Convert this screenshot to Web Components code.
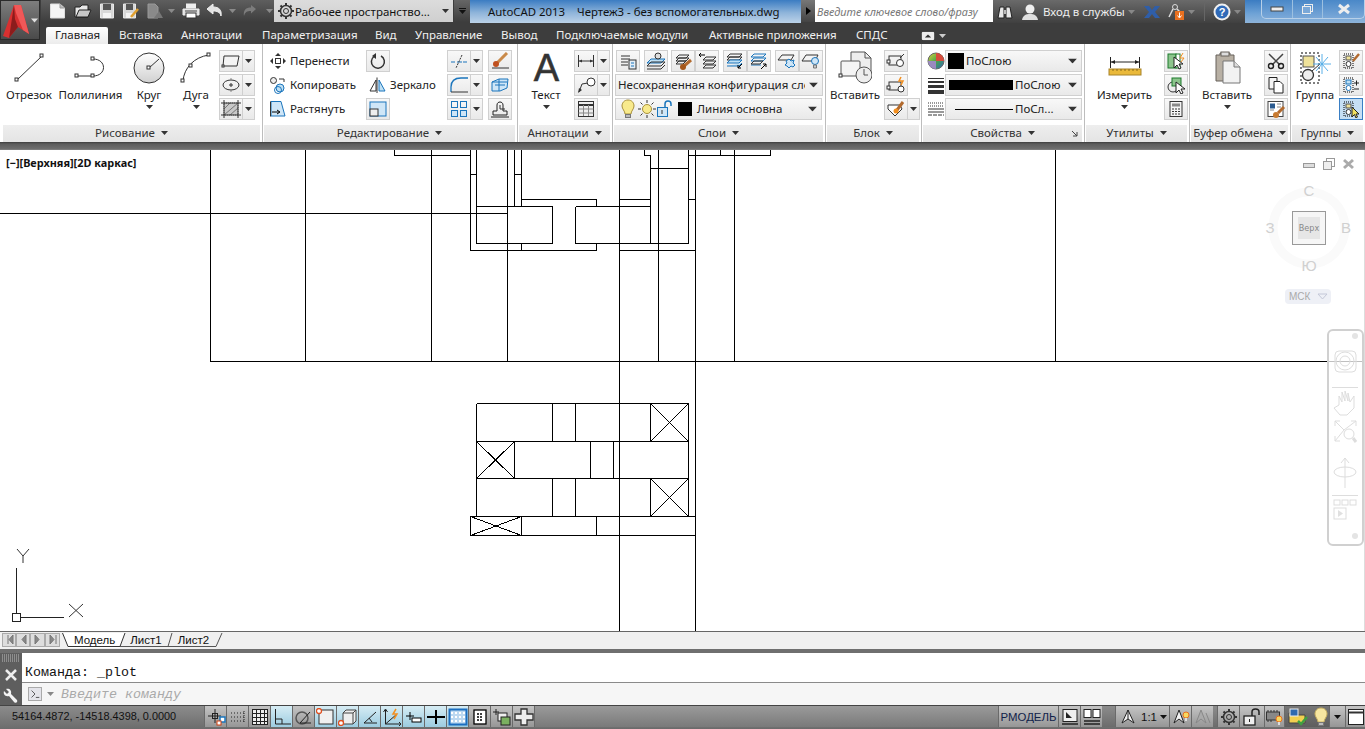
<!DOCTYPE html>
<html lang="ru">
<head>
<meta charset="utf-8">
<title>AutoCAD 2013</title>
<style>
	html, body { margin: 0; padding: 0; background: #fff; overflow: hidden; }
	body { font: 11.5px "Noto Sans", "DejaVu Sans", sans-serif; color: #222; }
</style>
</head>
<body>
<cad-app>
	<cad-titlebar></cad-titlebar>
	<cad-tabs></cad-tabs>
	<cad-ribbon>
		<cad-panel width="261" caption="Рисование" style="margin-left:2px">
			<cad-big icon="line" label="Отрезок" width="54"></cad-big>
			<cad-big icon="polyline" label="Полилиния" width="69"></cad-big>
			<cad-big icon="circle" label="Круг" width="48" drop></cad-big>
			<cad-big icon="arc" label="Дуга" width="46" drop></cad-big>
			<cad-col>
				<cad-tool icon="rect" split></cad-tool>
				<cad-tool icon="ellipse" split></cad-tool>
				<cad-tool icon="hatch" split></cad-tool>
			</cad-col>
		</cad-panel>
		<cad-panel width="255" caption="Редактирование">
			<cad-col width="97" style="margin-left:6px">
				<cad-row icon="move" label="Перенести"></cad-row>
				<cad-row icon="copy" label="Копировать"></cad-row>
				<cad-row icon="stretch" label="Растянуть"></cad-row>
			</cad-col>
			<cad-col width="81">
				<cad-tool icon="rotate"></cad-tool>
				<cad-row icon="mirror" label="Зеркало" style="margin-left:3px"></cad-row>
				<cad-tool icon="scale"></cad-tool>
			</cad-col>
			<cad-col width="41">
				<cad-tool icon="trim" split></cad-tool>
				<cad-tool icon="fillet" split></cad-tool>
				<cad-tool icon="array" split></cad-tool>
			</cad-col>
			<cad-col>
				<cad-tool icon="erase"></cad-tool>
				<cad-tool icon="explode"></cad-tool>
				<cad-tool icon="offset"></cad-tool>
			</cad-col>
		</cad-panel>
		<cad-panel width="95" caption="Аннотации">
			<cad-big label="Текст" width="56" drop glyph="A"></cad-big>
			<cad-col>
				<cad-tool icon="dim" split></cad-tool>
				<cad-tool icon="leader" split></cad-tool>
				<cad-tool icon="table"></cad-tool>
			</cad-col>
		</cad-panel>
		<cad-panel width="213" caption="Слои">
			<cad-col style="margin-left:2px">
				<cad-row-flat style="margin-left:1px">
					<cad-tool icon="layerprops"></cad-tool>
					<cad-tool icon="layermatch" style="margin-left:4px"></cad-tool>
					<cad-tool icon="layerbrush" style="margin-left:3px"></cad-tool>
					<cad-tool icon="layerprev"></cad-tool>
					<cad-tool icon="layerdown" style="margin-left:4px"></cad-tool>
					<cad-tool icon="layerup"></cad-tool>
					<cad-tool icon="layerstar" style="margin-left:4px"></cad-tool>
					<cad-tool icon="layerbulb"></cad-tool>
				</cad-row-flat>
				<cad-select width="208"><span>Несохраненная конфигурация сло</span></cad-select>
				<cad-select width="207">
					<cad-icon name="bulb" style="margin-left:3px"></cad-icon>
					<cad-icon name="sun" style="margin-left:3px"></cad-icon>
					<cad-icon name="lock"></cad-icon>
					<cad-swatch w="14" style="margin:0 5px 0 4px"></cad-swatch>
					<span>Линия основна</span>
				</cad-select>
			</cad-col>
		</cad-panel>
		<cad-panel width="96" caption="Блок">
			<cad-big icon="insert" label="Вставить" width="58"></cad-big>
			<cad-col>
				<cad-tool icon="blockedit"></cad-tool>
				<cad-tool icon="blockattr"></cad-tool>
				<cad-tool icon="blockmatch" split></cad-tool>
			</cad-col>
		</cad-panel>
		<cad-panel width="163" caption="Свойства" launcher>
			<cad-col width="19" style="margin-left:4px">
				<cad-icon name="wheel" style="height:22px"></cad-icon>
				<cad-icon name="weight" style="height:22px"></cad-icon>
				<cad-icon name="ltype" style="height:22px"></cad-icon>
			</cad-col>
			<cad-col>
				<cad-select width="137"><cad-swatch w="16" style="margin:0 2px 0 0"></cad-swatch><span>ПоСлою</span></cad-select>
				<cad-select width="137"><cad-swatch w="64" h="10" style="margin:0 2px 0 1px"></cad-swatch><span>ПоСлою</span></cad-select>
				<cad-select width="137"><cad-swatch w="58" h="1" style="margin:0 2px 0 7px"></cad-swatch><span>ПоСл...</span></cad-select>
			</cad-col>
		</cad-panel>
		<cad-panel width="105" caption="Утилиты">
			<cad-big icon="measure" label="Измерить" width="79" drop></cad-big>
			<cad-col>
				<cad-tool icon="select1"></cad-tool>
				<cad-tool icon="select2"></cad-tool>
				<cad-tool icon="calc"></cad-tool>
			</cad-col>
		</cad-panel>
		<cad-panel width="101" caption="Буфер обмена">
			<cad-big icon="paste" label="Вставить" width="74" drop></cad-big>
			<cad-col>
				<cad-tool icon="cut"></cad-tool>
				<cad-tool icon="copyclip"></cad-tool>
				<cad-tool icon="matchprop"></cad-tool>
			</cad-col>
		</cad-panel>
		<cad-panel width="74" caption="Группы">
			<cad-big icon="group" label="Группа" width="48"></cad-big>
			<cad-col>
				<cad-tool icon="grp1"></cad-tool>
				<cad-tool icon="grp2"></cad-tool>
				<cad-tool icon="grp3" active></cad-tool>
			</cad-col>
		</cad-panel>
	</cad-ribbon>
	<cad-viewport></cad-viewport>
	<cad-sheets></cad-sheets>
	<cad-command></cad-command>
	<cad-status></cad-status>
</cad-app>

<script>
const box = (x, y, s = 3) => `<rect x="${x}" y="${y}" width="${s}" height="${s}" fill="#fff" stroke="#333"/>`;
const D = '#333', B = '#1b75bc';

// name: [width, height, svg body]
const ICONS = {
	line: [34, 32, `<path d="M5 28 30 4" stroke="${D}" fill="none"/>${box(3,26)}${box(28,2)}`],
	polyline: [40, 32, `<path d="M6 24H22M22 7c14 0 14 17 0 17" stroke="${D}" fill="none"/>${box(4,22)}${box(20,22)}${box(20,5)}`],
	circle: [34, 34, `<defs><linearGradient id="cg" x1="0" y1="0" x2="0" y2="1"><stop offset="0" stop-color="#fff"/><stop offset="1" stop-color="#d0d0d0"/></linearGradient></defs><circle cx="17" cy="17" r="15" fill="url(#cg)" stroke="${D}"/><path d="M17 17 27 8" stroke="${D}"/>${box(15,15)}`],
	arc: [36, 34, `<path d="M5 30C6 17 16 6 31 4" stroke="${D}" fill="none"/>${box(3,28)}${box(11,13)}${box(29,2)}`],
	rect: [20, 16, `<path d="M3 3H18L16 13H2Z" fill="#f4f4f4" stroke="${D}"/>${box(1,12,2)}`],
	ellipse: [20, 16, `<ellipse cx="10" cy="8" rx="8" ry="5" fill="none" stroke="${D}"/><path d="M8 8h4M10 6v4" stroke="${D}"/><path d="M10 1v3M10 12v3" stroke="#888"/>`],
	hatch: [20, 18, `<rect x="3" y="3" width="14" height="12" fill="#c8c8c8" stroke="#666" stroke-dasharray="1 1"/><path d="M3 9 9 3M3 15 17 3M9 15 17 8" stroke="#777"/><path d="M0 3H20M0 15H20M3 0V18M17 0V18" stroke="${D}"/>`],
	move: [18, 18, `<path d="M9 1 6 4h6zM9 17 6 14h6zM1 9 4 6v6zM17 9 14 6v6z" fill="${D}"/><rect x="6.5" y="6.5" width="5" height="5" fill="#fff" stroke="${D}"/>`],
	copy: [18, 18, `<rect x="1.5" y="1.5" width="6" height="6" rx="3" fill="#eee" stroke="${D}"/><circle cx="11" cy="12" r="4" fill="#bfe0f4" stroke="${B}"/><circle cx="9" cy="14" r="3.5" fill="none" stroke="${B}"/><path d="M10 3h5v3" fill="none" stroke="${D}"/>`],
	stretch: [18, 18, `<path d="M12 1.500H2V16H16Z" fill="#cfe6f7" stroke="${B}"/><path d="M1.500 1.500V16.500" stroke="${D}"/><path d="M3 12H10M8 10l3 2-3 2" stroke="#000" fill="none"/>`],
	rotate: [18, 18, `<path d="M5 4.500A6.500 6.500 0 1 0 12 4" fill="none" stroke="${D}" stroke-width="1.500"/><path d="M7 1v6L3 4z" fill="${D}"/>`],
	mirror: [18, 18, `<path d="M8 1.500V17M7 4 1 15H7Z" fill="none" stroke="${D}"/><path d="M10 4 16 15H10Z" fill="#bfe0f4" stroke="${B}"/>`],
	scale: [20, 18, `<rect x="2" y="2" width="16" height="14" fill="#cfe6f7" stroke="${B}"/><rect x="2" y="9" width="8" height="7" fill="#eee" stroke="${D}"/>`],
	trim: [20, 16, `<path d="M2 9H6M8 9H18" stroke="${B}" fill="none" stroke-dasharray="5 1"/><path d="M13 2 7 15" stroke="${D}" stroke-dasharray="2 1"/>`],
	fillet: [20, 18, `<path d="M2 16V11C2 5 6 2 12 2H19" fill="none" stroke="${B}" stroke-width="1.300"/><path d="M2 16H19" stroke="${D}"/>`],
	array: [20, 18, `<g fill="none" stroke="${B}"><rect x="2.500" y="1.500" width="6" height="6"/><rect x="11.500" y="1.500" width="6" height="6"/></g><g fill="#cfe6f7" stroke="${B}"><rect x="2.500" y="10.500" width="6" height="6"/><rect x="11.500" y="10.500" width="6" height="6"/></g>`],
	erase: [20, 18, `<path d="M2 16H19" stroke="${D}"/><path d="M17 1 7 11" stroke="#c98a4a" stroke-width="3"/><circle cx="6" cy="12" r="3" fill="#c0501f"/>`],
	explode: [20, 18, `<path d="M2 6 9 3H18L17 12 10 15H2ZM9 3 9 15M2 6H17" fill="#cfe6f7" stroke="${B}"/><path d="M5 9h10" stroke="${B}"/>`],
	offset: [20, 18, `<path d="M3 15V11H7V5C7 1 13 1 13 5V11H17V15Z" fill="none" stroke="#222"/><path d="M1 17H19" stroke="#222"/><path d="M10 5V9H15" stroke="${D}" fill="none"/>`],
	dim: [20, 16, `<path d="M2.500 2V14M17.500 2V14M3 8H17" stroke="${D}" fill="none"/><path d="M3 8 6 6.500V9.500ZM17 8 14 6.500V9.500Z" fill="${D}"/>`],
	leader: [22, 18, `<path d="M4 16 7 8 13 7" fill="none" stroke="${D}"/><path d="M3 17 4 12 7 14Z" fill="${D}"/><circle cx="16" cy="6" r="4" fill="#fff" stroke="${D}"/>`],
	table: [20, 18, `<rect x="2.500" y="1.500" width="15" height="15" fill="#eee" stroke="${D}"/><path d="M2.500 5H17.500" stroke="${D}" stroke-width="2"/><path d="M2.500 9H17.500M2.500 13H17.500M7.500 5V16M12.500 5V16" stroke="#888"/>`],
	layerprops: [20, 18, `<path d="M3 4H12M3 7H12M3 10H10M3 13H10" stroke="${D}"/><rect x="11" y="8" width="7" height="9" fill="#e4eef6" stroke="${D}"/><path d="M13 11h3M13 14h3" stroke="${B}"/>`],
	layermatch: [20, 18, `<path d="M1 11 5 7H19L15 11Z" fill="#bfe0f4" stroke="${B}"/><path d="M1 14 5 10H19L15 14ZM1 17H15L19 13" fill="none" stroke="${D}"/><circle cx="12" cy="4" r="3" fill="#ddd" stroke="${D}"/>`],
	layerbrush: [20, 18, `<path d="M3 6 6 3H16L13 6ZM3 9 6 6H16L13 9ZM3 12 6 9H13L10 12Z" fill="none" stroke="${D}"/><path d="M18 8 11 14" stroke="#b26a2e" stroke-width="3"/><circle cx="10" cy="15" r="3" fill="#a5581c"/>`],
	layerprev: [20, 18, `<path d="M6 8 9 5H19L16 8ZM6 12 9 9H19L16 12ZM6 16 9 13H19L16 16Z" fill="none" stroke="${D}"/><path d="M8 3H2M4 1 2 3l2 2" fill="none" stroke="#000"/>`],
	layerdown: [20, 18, `<path d="M2 5 5 2H17L14 5ZM2 8 5 5H17L14 8Z" fill="none" stroke="${D}"/><path d="M2 11 5 8H17L14 11ZM2 14H14L17 11" fill="#bfe0f4" stroke="${B}"/><path d="M17 12 13 16M13 13V16H16" stroke="#000" fill="none"/>`],
	layerup: [20, 18, `<path d="M2 5 5 2H17L14 5ZM2 9 5 6H17L14 9ZM2 13H12" fill="none" stroke="${B}"/><path d="M2 12 5 9H14L11 12Z" fill="none" stroke="${D}"/><path d="M12 17 17 12M14 12H17V15" stroke="#000" fill="none"/>`],
	layerstar: [20, 18, `<path d="M1 8 5 3H17L14 8Z" fill="none" stroke="${D}"/><path d="M12 7 14 9 17 8 16 11 18 13 16 15 14 14 12 16 10 14 8 13 10 11 9 9Z" fill="#cfe6f7" stroke="${B}"/>`],
	layerbulb: [20, 18, `<path d="M1 9 5 3H17L14 9Z" fill="none" stroke="${D}"/><circle cx="14" cy="9" r="3.500" fill="#cfe6f7" stroke="${B}"/><path d="M12.500 13h3v3h-3z" fill="#ccc" stroke="#777"/>`],
	bulb: [14, 20, `<path d="M7 1C3 1 1 4 1 7c0 3 3 5 3 8h6c0-3 3-5 3-8 0-3-2-6-6-6Z" fill="#f8ea8c" stroke="#a8903a"/><rect x="4.500" y="15.500" width="5" height="3" fill="#bbb" stroke="#777"/>`],
	sun: [18, 18, `<circle cx="9" cy="9" r="4.500" fill="#f8ea8c" stroke="#a8903a"/><path d="M9 0V3M9 15V18M0 9H3M15 9H18M2.500 2.500 4.500 4.500M13.500 13.500 15.500 15.500M15.500 2.500 13.500 4.500M2.500 15.500 4.500 13.500" stroke="${D}"/>`],
	lock: [18, 18, `<rect x="1.500" y="7.500" width="10" height="9" fill="#cfe6f7" stroke="${B}"/><path d="M9 7V4C9 0 15 0 15 4V6" fill="none" stroke="${B}" stroke-width="1.500"/><path d="M6 10V14" stroke="${D}"/>`],
	insert: [34, 34, `<path d="M13 1H27L33 7V24H13Z" fill="#eee" stroke="#555"/><path d="M27 1V7H33" fill="none" stroke="#555"/><rect x="3" y="10" width="19" height="15" rx="1" fill="#f4f4f4" stroke="#555"/>${box(1,23)}<circle cx="26" cy="24" r="8" fill="#eee" stroke="#555"/><path d="M26 18V24H30" fill="none" stroke="#555"/>`],
	blockedit: [20, 18, `<rect x="3" y="4" width="12" height="9" fill="none" stroke="${D}"/>${box(1,8)}<path d="M14 6 18 2" stroke="${D}"/><circle cx="14" cy="11" r="3.500" fill="#fff" stroke="${D}"/>`],
	blockattr: [20, 18, `<rect x="3" y="6" width="12" height="8" fill="none" stroke="${D}"/>${box(1,10)}<circle cx="15" cy="13" r="3" fill="#fff" stroke="${D}"/><path d="M15 1 13 5H17L15 9" stroke="#f39020" fill="none" stroke-width="1.500"/>`],
	blockmatch: [20, 18, `<path d="M2 5H14L16 9 9 16 2 9Z" fill="#fff" stroke="${D}"/><path d="M17 2 11 10" stroke="#b26a2e" stroke-width="3"/><circle cx="10" cy="11" r="2.500" fill="#f39020"/>`],
	wheel: [18, 22, `<defs><linearGradient id="wg" x1="0" y1="0" x2="1" y2="1"><stop offset="0" stop-color="#e2d23c"/><stop offset=".5" stop-color="#48a848"/><stop offset="1" stop-color="#3060c0"/></linearGradient></defs><circle cx="9" cy="11" r="8" fill="url(#wg)" stroke="#666"/><path d="M9 11 17 11A8 8 0 0 0 9 3Z" fill="#d84c3c"/><path d="M9 11 1 11A8 8 0 0 0 9 19Z" fill="#9a8ac0"/>`],
	weight: [18, 22, `<rect x="1" y="4" width="16" height="1" fill="#333"/><rect x="1" y="7" width="16" height="2" fill="#333"/><rect x="1" y="11" width="16" height="3" fill="#333"/><rect x="1" y="16" width="16" height="4" fill="#333"/>`],
	ltype: [18, 22, `<path d="M1 5H17" stroke="#333" stroke-dasharray="1 1"/><path d="M1 8H17" stroke="#333" stroke-dasharray="1 1"/><path d="M1 11H17M1 14H17" stroke="#333"/><path d="M1 17H17" stroke="#333" stroke-dasharray="4 1"/>`],
	measure: [34, 28, `<path d="M2.500 3V14M31.500 3V14M3 8H31" stroke="#222"/><path d="M3 8 7 6V10ZM31 8 27 6V10Z" fill="#222"/><rect x="1" y="15" width="32" height="6" fill="#eab93a" stroke="#a8842a"/><path d="M5 15v2M9 15v2M13 15v2M17 15v2M21 15v2M25 15v2M29 15v2" stroke="#8a6a18"/>`],
	select1: [20, 18, `<rect x="2" y="2" width="8" height="14" fill="#8cc48c" stroke="#1c7a2c"/><rect x="10" y="2" width="4" height="14" fill="#fff" stroke="#1c7a2c"/><path d="M8 5V16L11 13 13 17 15 16 13 12H17Z" fill="#fff" stroke="#222"/><path d="M17 1 14 6H18L15 10" stroke="#f39020" fill="none"/>`],
	select2: [20, 18, `<circle cx="7" cy="11" r="5" fill="none" stroke="#333"/><rect x="6" y="2" width="9" height="8" fill="#8cc48c" stroke="#1c7a2c"/><path d="M10 6V17L13 14 15 18 17 17 15 13H19Z" fill="#fff" stroke="#222"/>`],
	calc: [20, 18, `<rect x="4" y="1.500" width="12" height="15" fill="#f4f4f4" stroke="#333"/><rect x="6" y="3.500" width="8" height="3" fill="#888"/><path d="M6 9h2M9 9h2M12 9h2M6 11.500h2M9 11.500h2M12 11.500h2M6 14h2M9 14h2M12 14h2" stroke="#333"/>`],
	paste: [28, 34, `<path d="M3 4H7V2H17V4H21V30H3Z" fill="#b8b0a4" stroke="#66605a"/><rect x="8" y="1" width="8" height="4" fill="#ddd" stroke="#66605a"/><path d="M10 10H21L27 16V32H10Z" fill="#f2f2f2" stroke="#777"/><path d="M21 10V16H27" fill="#ddd" stroke="#777"/>`],
	cut: [20, 18, `<path d="M3 2 14 13M17 2 6 13" stroke="#444" stroke-width="1.500"/><circle cx="5" cy="14" r="2.500" fill="none" stroke="#222" stroke-width="1.400"/><circle cx="15" cy="14" r="2.500" fill="none" stroke="#222" stroke-width="1.400"/>`],
	copyclip: [20, 18, `<path d="M3 1.500H11V13H3Z" fill="#f4f4f4" stroke="#222"/><path d="M8 5.500H14L17 8.500V17H8Z" fill="#fff" stroke="#222"/>`],
	matchprop: [20, 18, `<rect x="2" y="1.500" width="15" height="15" fill="#fff" stroke="#444"/><rect x="4" y="3.500" width="5" height="5" fill="#2a5a90"/><path d="M11 4h4M11 7h4M4 10h4" stroke="#888"/><path d="M18 7 12 13" stroke="#b26a2e" stroke-width="3"/><circle cx="10" cy="15" r="3" fill="#c87a30"/>`],
	group: [34, 34, `<rect x="3" y="2" width="18" height="30" fill="none" stroke="#000" stroke-dasharray="2 2"/><rect x="5" y="5" width="11" height="11" fill="#efe29a" stroke="#555"/><circle cx="10" cy="24" r="5.500" fill="#eee" stroke="#333" stroke-width="1.300"/><path d="M14 20 22 13" stroke="#333"/><path d="M24 3V23M15 13H33M18 6 30 20M30 6 18 20" stroke="#5ab0e8"/>`],
	grp1: [20, 18, `<rect x="3" y="2" width="9" height="14" fill="none" stroke="#000" stroke-dasharray="1 1"/><rect x="5" y="4" width="5" height="4" fill="#efe29a" stroke="#555"/><circle cx="7.500" cy="12" r="2.500" fill="#fff" stroke="#333"/><path d="M18 2 12 9" stroke="#b26a2e" stroke-width="2.500"/>`],
	grp2: [20, 18, `<rect x="3" y="2" width="9" height="14" fill="none" stroke="#000" stroke-dasharray="1 1"/><rect x="5" y="4" width="5" height="4" fill="#bfe0f4" stroke="${B}"/><circle cx="7.500" cy="12" r="2.500" fill="#fff" stroke="${B}"/><path d="M13 7h5M15.500 4.500v5M13 13h5" stroke="#222"/>`],
	grp3: [20, 18, `<rect x="3" y="2" width="9" height="14" fill="none" stroke="#000" stroke-dasharray="1 1"/><rect x="5" y="4" width="5" height="4" fill="#efe29a" stroke="#555"/><circle cx="7.500" cy="12" r="2.500" fill="#fff" stroke="#333"/><path d="M11 7V17L13.500 14.500 15 18 16.500 17 15 14H18Z" fill="#f0e060" stroke="#222"/>`],
	// quick access
	qnew: [17, 18, `<path d="M1.500 2H11L15.500 6V16H1.500Z" fill="#f4f4f4" stroke="#ddd"/><path d="M11 2V6H15.500" fill="#bbb" stroke="#999"/>`],
	qopen: [18, 18, `<path d="M1 5H6L8 3H14V8H16L14 15H1Z" fill="#e8e8e8" stroke="#222"/><path d="M2 15 5 8H17L14 15Z" fill="#c8c8c8" stroke="#222"/>`],
	qsave: [16, 18, `<path d="M1.500 2H14.500V16H1.500Z" fill="#d8d8d8" stroke="#e8e8e8"/><rect x="4" y="2" width="8" height="6" fill="#555"/><rect x="4" y="11" width="8" height="5" fill="#f4f4f4"/>`],
	qsaveas: [18, 18, `<path d="M1.500 2H13.500V16H1.500Z" fill="#d8d8d8" stroke="#e8e8e8"/><rect x="4" y="2" width="7" height="6" fill="#555"/><rect x="4" y="11" width="7" height="5" fill="#f4f4f4"/><path d="M16 7 9 15" stroke="#e0a030" stroke-width="2.500"/>`],
	qplot: [19, 18, `<path d="M2 2H9L12 5V16H2Z" fill="#8a8a8a" stroke="#999"/><path d="M8 16 13 9 17 16Z" fill="#777"/>`],
	qprint: [18, 18, `<rect x="4" y="1.500" width="10" height="5" fill="#eee"/><path d="M1 7H17V13H1Z" fill="#e0e0e0" stroke="#eee"/><rect x="4" y="11" width="10" height="5" fill="#fff" stroke="#333"/><path d="M3 9H15" stroke="#444"/>`],
	qundo: [17, 18, `<path d="M1 7 7 2V5C13 5 16 8 15 14 14 10 11 9 7 9V12Z" fill="#e4e4e4" stroke="#f0f0f0"/>`],
	qredo: [15, 18, `<path d="M14 7 9 3V5.500C4 5.500 1 8 2 14 3 10 5 9 9 9V11.500Z" fill="#7c7c7c"/>`],
	gear: [18, 18, `<circle cx="9" cy="9" r="5.500" fill="none" stroke="#333" stroke-width="1.500"/><circle cx="9" cy="9" r="2.500" fill="none" stroke="#333"/><path d="M9 1V4M9 14V17M1 9H4M14 9H17M3.500 3.500 5 5M13 13 14.500 14.500M14.500 3.500 13 5M3.500 14.500 5 13" stroke="#333" stroke-width="2"/>`],
	binoc: [18, 18, `<path d="M2 15 4 4H8V15ZM10 15V4H14L16 15Z" fill="#e8e8e8" stroke="#222"/><rect x="8" y="7" width="2" height="4" fill="#bbb"/>`],
	user: [18, 18, `<circle cx="9" cy="6" r="4.500" fill="#f0f0f0"/><path d="M1 17C2 12 5 11 9 11 13 11 16 12 17 17Z" fill="#e0e0e0"/>`],
	xchange: [18, 18, `<path d="M1 3H6L9 7 12 3H17L12 9 17 15H12L9 11 6 15H1L6 9Z" fill="#2f5ea8"/>`],
	appdl: [17, 18, `<circle cx="7" cy="4" r="2.500" fill="none" stroke="#ddd"/><path d="M1 14 5 6M9 6 13 10" stroke="#ddd" stroke-width="1.500"/><rect x="7" y="8" width="9" height="9" fill="#e87020"/><path d="M11.500 9.500V14M9.500 12.500 11.500 15 13.500 12.500" stroke="#fff" fill="none"/>`],
	// status bar
	sSnap: [20, 18, `<path d="M9 1V15M2 8H15" stroke="#222"/><rect x="6.500" y="5.500" width="5" height="5" fill="none" stroke="#222"/><rect x="14" y="9" width="5" height="5" fill="#fff" stroke="${B}" stroke-width="1.500"/><rect x="11" y="13" width="4" height="4" fill="#fff" stroke="#d04010"/>`],
	sDots: [20, 18, `<path d="M3 5H17M3 9H17M3 13H17" stroke="#222" stroke-dasharray="1 2"/><path d="M16 3V15" stroke="#222" stroke-dasharray="1 1"/>`],
	sGrid: [20, 18, `<rect x="2" y="1" width="16" height="16" fill="#eee"/><path d="M2 1.500H18M2 5.500H18M2 9.500H18M2 13.500H18M2 16.500H18M2.500 1V17M6.500 1V17M10.500 1V17M14.500 1V17M17.500 1V17" stroke="#222"/>`],
	sOrtho: [20, 18, `<path d="M3.500 1V16H19M3.500 11H10V16" fill="none" stroke="#222"/>`],
	sPolar: [20, 18, `<circle cx="8" cy="10" r="6" fill="none" stroke="#555" stroke-width="1.500"/><path d="M6 15 16 4M6 15H17" stroke="#222"/>`],
	sOsnap: [20, 18, `<rect x="3" y="2" width="14" height="14" fill="#f0f0f0" stroke="#333"/><circle cx="3" cy="3" r="2.500" fill="#fff" stroke="#e05020" stroke-width="1.300"/>`],
	s3d: [20, 18, `<path d="M5 5 8 2H18V13L15 16H5Z" fill="#eee" stroke="#444"/><path d="M5 5H15V16M15 5 18 2" fill="none" stroke="#444"/><circle cx="3" cy="15" r="2.500" fill="#fff" stroke="#e05020" stroke-width="1.300"/>`],
	sAngle: [20, 18, `<path d="M16 4 4 15H17" fill="none" stroke="#222"/><path d="M9 10 12 14" stroke="#222"/>`],
	sDyn: [20, 18, `<path d="M3.500 2V16H19" stroke="#222" fill="none"/><path d="M3.500 16 15 6" stroke="#222"/><path d="M14 1 11 6H15L12 11" stroke="#f39020" stroke-width="1.500" fill="none"/><path d="M1.500 4 3.500 1 5.500 4M17 14 19 16 17 18" fill="none" stroke="#222"/>`],
	sDucs: [20, 18, `<path d="M2 8H10M6 4V12" stroke="#000"/><rect x="8" y="10" width="9" height="4" fill="#fff" stroke="#000"/>`],
	sPlus: [20, 18, `<path d="M1 9H19" stroke="#000" stroke-width="2"/><path d="M10 2V16" stroke="#000" stroke-width="2"/>`],
	sTrans: [20, 18, `<rect x="1.500" y="1.500" width="17" height="15" fill="#bcd8f0" stroke="#1b6ec0" stroke-width="2"/><path d="M3 5H17M3 9H17M3 13H17" stroke="#fff" stroke-dasharray="2 2" stroke-width="2"/>`],
	sList: [20, 18, `<rect x="4" y="2" width="12" height="14" fill="#fff" stroke="#000" stroke-width="1.300"/><path d="M7 6H13M7 9H13M7 12H13" stroke="#000" stroke-dasharray="2 1" stroke-width="1.500"/>`],
	sQP: [20, 18, `<path d="M1 4H7M4 1V7" stroke="#222"/><rect x="6" y="5" width="9" height="8" fill="#eee" stroke="#222"/><rect x="9" y="9" width="9" height="8" fill="#7ab060" stroke="#222"/>`],
	sCycle: [20, 18, `<path d="M7 1H13V6H19V12H13V17H7V12H1V6H7Z" fill="#eee" stroke="#333" stroke-width="1.300"/>`],
	sModel: [20, 18, `<rect x="3" y="1.500" width="14" height="12" fill="#eee" stroke="#222"/><path d="M6 10 6 4 12 10Z" fill="#222"/><path d="M2 16H18" stroke="#222" stroke-width="1.500"/>`],
	sLayout: [20, 18, `<rect x="2" y="1.500" width="7" height="8" fill="#fff" stroke="#222"/><rect x="11" y="1.500" width="7" height="8" fill="#fff" stroke="#222"/><path d="M2 13H18M2 16H18" stroke="#222" stroke-width="1.500"/>`],
	sAnno: [20, 18, `<path d="M10 2 4 15 10 11 16 15Z" fill="#f2f2f2" stroke="#222"/><path d="M10 2V11" stroke="#222"/>`],
	sAnno2: [20, 18, `<path d="M8 2 3 15 8 11 13 15Z" fill="#f2f2f2" stroke="#222"/><circle cx="15" cy="7" r="3" fill="#f7d860" stroke="#e87020"/><path d="M14 10h2v3h-2z" fill="#ddd"/>`],
	sAnno3: [20, 18, `<path d="M8 2 3 15 8 11 13 15Z" fill="#aaa" stroke="#888"/><path d="M13 5 17 15" stroke="#888"/>`],
	sLock: [20, 18, `<rect x="2" y="8" width="11" height="9" fill="#eee" stroke="#222" stroke-width="1.300"/><path d="M10 8V4C10 0 17 0 17 4V7" fill="none" stroke="#222" stroke-width="1.500"/><path d="M7.500 11V14" stroke="#222"/>`],
	sChip: [20, 18, `<rect x="1.500" y="4" width="13" height="8" fill="#888" stroke="#333"/><path d="M3 2V4M6 2V4M9 2V4M12 2V4M3 12V14M6 12V14" stroke="#333"/><circle cx="14" cy="11" r="3" fill="#f7d860" stroke="#e87020"/><path d="M13 14h2v3h-2z" fill="#ddd"/>`],
	sIso: [22, 18, `<path d="M2 5H8L10 7H18V15H2Z" fill="#f2d050" stroke="#444"/><rect x="3" y="1" width="8" height="7" fill="#2f6ab0" stroke="#eee"/><path d="M11 13 14 16 20 9" stroke="#40a040" stroke-width="2.500" fill="none"/>`],
	sBulb: [14, 20, `<path d="M7 1C3 1 1 4 1 7c0 3 3 5 3 8h6c0-3 3-5 3-8 0-3-2-6-6-6Z" fill="#f6e6a0" stroke="#c8b060"/><rect x="4.500" y="15.500" width="5" height="3" fill="#bbb" stroke="#777"/>`],
	sWin: [18, 18, `<rect x="1.500" y="1.500" width="15" height="15" fill="#fff" stroke="#222"/><path d="M1.500 4.500H16.500" stroke="#333" stroke-width="2"/>`],
	gridBtn: [16, 12, `<path d="M0 2C0 1 1 0 2 0H14C15 0 16 1 16 2V10C16 11 15 12 14 12H2C1 12 0 11 0 10Z" fill="#eee"/><path d="M4 8 8 4 12 8Z" fill="#333"/>`],
	caret: [7, 4, `<path d="M0 0H7L3.500 4Z" fill="currentColor"/>`]
};

class CadIcon extends HTMLElement {
	connectedCallback() {
		const def = ICONS[this.getAttribute('name')];
		if (!def || this.shadowRoot) return;
		this.attachShadow({ mode: 'open' }).innerHTML = `
			<style>:host { display: inline-flex; align-items: center; justify-content: center; flex: none; } svg { display: block; }</style>
			<svg width="${def[0]}" height="${def[1]}" viewBox="0 0 ${def[0]} ${def[1]}" shape-rendering="auto">${def[2]}</svg>`;
	}
}

class CadApp extends HTMLElement {
	constructor() {
		super();
		this.attachShadow({ mode: 'open' }).innerHTML = `
			<style>:host { display: flex; flex-direction: column; width: 1365px; height: 729px; overflow: hidden; position: relative; }</style>
			<slot></slot>`;
	}
}

class CadTitlebar extends HTMLElement {
	constructor() {
		super();
		this.attachShadow({ mode: 'open' }).innerHTML = `
			<style>
				:host { display: flex; flex: none; height: 23px; position: relative; background: #3d3d3d; color: #fff; }
				.logo {
					position: absolute; left: 0; top: 0; width: 40px; height: 40px; z-index: 3; box-sizing: border-box;
					background: linear-gradient(#7d7d7d, #4a4a4a); border: 1px solid #2a2a2a;
				}
				.logo svg { display: block; }
				.qat { display: flex; align-items: center; width: 233px; margin-left: 41px; height: 22px; background: linear-gradient(#5e5e5e, #3d3d3d); }
				.qat > * { position: relative; }
				.caret { color: #8a8a8a; margin: 0 0 0 3px; display: inline-flex; }
				.combo {
					width: 179px; box-sizing: border-box; height: 22px; display: flex; align-items: center;
					background: linear-gradient(#dcdcdc, #cfcfcf); color: #111; padding-left: 3px; font-size: 11.5px; flex: none;
				}
				.combo span { flex: 1; margin-left: 0; white-space: nowrap; }
				.combo cad-icon:last-child { color: #333; margin-right: 4px; }
				.qd { width: 16px; margin-left: 1px; height: 22px; background: linear-gradient(#666, #3d3d3d); display: flex; flex-direction: column; align-items: center; justify-content: center; color: #111; flex: none; }
				.qd i { display: block; width: 7px; height: 1px; background: #111; margin-bottom: 1px; }
				.glass { flex: none; width: 331px; height: 23px; background: linear-gradient(#3b7cc2, #8eb4da 55%, #bcd2e8); color: #111; display: flex; align-items: center; white-space: pre; font-size: 11.4px; }
				.glass span { margin-left: 18px; }
				.nav { width: 14px; flex: none; background: linear-gradient(#777, #444); display: flex; align-items: center; justify-content: center; height: 22px; }
				.nav b { width: 0; height: 0; border: 4px solid transparent; border-left: 5px solid #000; border-right: 0; }
				.search { width: 178px; flex: none; height: 22px; background: #fff; color: #777; font-style: italic; display: flex; align-items: center; padding-left: 2px; box-sizing: border-box; white-space: nowrap; overflow: hidden; font-size: 10.9px; }
				.serv { flex: none; width: 252px; height: 23px; background: linear-gradient(#6a6a6a, #404040); display: flex; align-items: center; color: #eee; box-sizing: border-box; padding-left: 2px; }
				.serv span { margin: 0 0 0 4px; white-space: nowrap; }
				.win { flex: 1; background: linear-gradient(#3b7cc2, #6fa3d6 60%, #8eb4da); display: flex; height: 23px; padding-left: 16px; margin-top: 0; }
				.frame { display: flex; flex: 1; height: 19px; box-sizing: border-box; border: 1px solid #b8d0e8; border-top: 0; border-radius: 0 0 5px 5px; background: linear-gradient(#4a88c8, #7aa8d8); }
				.frame div { display: flex; align-items: center; justify-content: center; border-right: 1px solid #9cc0e0; }
				.sep { width: 1px; height: 18px; background: #666; margin: 0 8px 0 9px; }
				svg.help { display: block; }
				.serv span.sub { color: #888; margin-left: 3px; display: inline-flex; }
			</style>
			<div class="logo">
				<svg width="38" height="38" viewBox="0 0 38 38">
					<path d="M2 35 13 4H20L28 33 17 26 8 37Z" fill="#d83030"/>
					<path d="M13 4 8 37 17 26 14 18Z" fill="#8c1c1c"/>
					<path d="M13 4H20L28 33 22 29 15 12Z" fill="#f05858"/>
					<path d="M30 17.500H37L33.500 21.500Z" fill="#e0e0e0"/>
				</svg>
			</div>
			<div class="qat">
				<cad-icon name="qnew" style="margin-left:8px"></cad-icon>
				<cad-icon name="qopen" style="margin-left:8px"></cad-icon>
				<cad-icon name="qsave" style="margin-left:7px"></cad-icon>
				<cad-icon name="qsaveas" style="margin-left:7px"></cad-icon>
				<cad-icon name="qplot" style="margin-left:6px"></cad-icon>
				<span class="caret"><cad-icon name="caret"></cad-icon></span>
				<cad-icon name="qprint" style="margin-left:7px"></cad-icon>
				<cad-icon name="qundo" style="margin-left:6px"></cad-icon>
				<span class="caret" style="margin-left:6px"><cad-icon name="caret"></cad-icon></span>
				<cad-icon name="qredo" style="margin-left:6px"></cad-icon>
				<span class="caret" style="margin-left:9px"><cad-icon name="caret"></cad-icon></span>
			</div>
			<div class="combo">
				<cad-icon name="gear"></cad-icon>
				<span>Рабочее пространство...</span>
				<cad-icon name="caret"></cad-icon>
			</div>
			<div class="qd"><i></i><cad-icon name="caret"></cad-icon></div>
			<div class="glass"><span>AutoCAD 2013    Чертеж3 - без вспомогательных.dwg</span></div>
			<div class="nav"><b></b></div>
			<div class="search">Введите ключевое слово/фразу</div>
			<div class="serv">
				<cad-icon name="binoc" style="margin-left:1px"></cad-icon>
				<cad-icon name="user" style="margin-left:7px"></cad-icon>
				<span>Вход в службы</span>
				<span class="sub"><cad-icon name="caret"></cad-icon></span>
				<cad-icon name="xchange" style="margin-left:8px"></cad-icon>
				<cad-icon name="appdl" style="margin-left:7px"></cad-icon>
				<span class="sub"><cad-icon name="caret"></cad-icon></span>
				<div class="sep"></div>
				<svg class="help" width="18" height="18" viewBox="0 0 18 18"><circle cx="9" cy="9" r="8.500" fill="#f0f0f0"/><circle cx="9" cy="9" r="6.500" fill="#2f6ab8"/><text x="9" y="13" text-anchor="middle" font-family="Liberation Sans" font-weight="bold" font-size="11" fill="#fff">?</text></svg>
				<span class="sub"><cad-icon name="caret"></cad-icon></span>
			</div>
			<div class="win">
				<div class="frame">
					<div style="width:30px"><svg width="14" height="8"><rect x="1" y="2" width="12" height="4" fill="#eee" stroke="#444"/></svg></div>
					<div style="width:29px"><svg width="13" height="12"><rect x="3.500" y="1.500" width="8" height="7" fill="none" stroke="#eee"/><rect x="1.500" y="3.500" width="8" height="7" fill="#7aa8d8" stroke="#eee"/></svg></div>
					<div style="flex:1;border:0"><svg width="14" height="12"><path d="M2 2 12 10M12 2 2 10" stroke="#eee" stroke-width="3"/></svg></div>
				</div>
			</div>`;
	}
}

class CadTabs extends HTMLElement {
	constructor() {
		super();
		const tabs = [['Вставка', 62], ['Аннотации', 81], ['Параметризация', 113], ['Вид', 40], ['Управление', 86], ['Вывод', 55], ['Подключаемые модули', 153], ['Активные приложения', 147], ['СПДС', 64]];
		this.attachShadow({ mode: 'open' }).innerHTML = `
			<style>
				:host { display: flex; flex: none; height: 21px; background: #3d3d3d; color: #f0f0f0; align-items: flex-end; padding-left: 46px; font-size: 11.5px; }
				.tab { height: 17px; box-sizing: border-box; padding-left: 11px; white-space: nowrap; line-height: 16px; flex: none; }
				.on { width: 62px; background: linear-gradient(#fff, #ececec); color: #222; border-radius: 2px 2px 0 0; padding-left: 9px; }
				.min { display: flex; align-items: center; height: 17px; padding-left: 11px; color: #ccc; gap: 3px; }
			</style>
			<div class="tab on">Главная</div>
			${tabs.map(([t, w]) => `<div class="tab" style="width:${w}px">${t}</div>`).join('')}
			<div class="min"><cad-icon name="gridBtn" style="transform:scale(.8,.7)"></cad-icon><cad-icon name="caret"></cad-icon></div>`;
	}
}

class CadRibbon extends HTMLElement {
	constructor() {
		super();
		this.attachShadow({ mode: 'open' }).innerHTML = `
			<style>
				:host { display: flex; flex: none; height: 106px; box-sizing: border-box; background: linear-gradient(#fff 98px, #3d3d3d 98px, #5c5c5c 100px, #6e6e6e 105px, #8a8a8a 106px); padding-bottom: 8px; }
			</style>
			<slot></slot>`;
	}
}

class CadPanel extends HTMLElement {
	constructor() {
		super();
		this.attachShadow({ mode: 'open' });
	}
	connectedCallback() {
		const launcher = this.hasAttribute('launcher') ? `<svg class="launch" width="8" height="8"><path d="M1 1 6 6M6 2V6H2" fill="none" stroke="#444"/></svg>` : '';
		this.shadowRoot.innerHTML = `
			<style>
				:host { display: flex; flex-direction: column; flex: none; width: ${this.getAttribute('width')}px; box-sizing: border-box; border-right: 1px solid #bdbdbd; height: 98px; }
				:host(:last-child) { border-right: 0; }
				.body { display: flex; height: 81px; box-sizing: border-box; padding-top: 6px; background: #fff; }
				.cap { height: 17px; box-sizing: border-box; padding-bottom: 2px; margin: 0 2px 0 1px; background: linear-gradient(#eeeeee, #e4e4e4); color: #333; display: flex; align-items: center; justify-content: center; font-size: 11.5px; position: relative; gap: 6px; }
				.cap cad-icon { color: #333; }
				.launch { position: absolute; right: 3px; top: 5px; }
			</style>
			<div class="body"><slot></slot></div>
			<div class="cap"><span>${this.getAttribute('caption')}</span><cad-icon name="caret"></cad-icon>${launcher}</div>`;
	}
}

class CadBig extends HTMLElement {
	constructor() {
		super();
		this.attachShadow({ mode: 'open' });
	}
	connectedCallback() {
		const name = this.getAttribute('icon');
		const glyph = this.getAttribute('glyph');
		const art = glyph ? `<span class="glyph">${glyph}</span>` : `<cad-icon name="${name}"></cad-icon>`;
		const drop = this.hasAttribute('drop') ? `<cad-icon name="caret" class="drop"></cad-icon>` : '';
		this.shadowRoot.innerHTML = `
			<style>
				:host { display: flex; flex-direction: column; align-items: center; flex: none; width: ${this.getAttribute('width')}px; color: #222; white-space: nowrap; }
				.art { height: 36px; display: flex; align-items: center; justify-content: center; }
				.glyph { font: 38px/36px "Liberation Sans", sans-serif; color: #333; margin-left: 1px; -webkit-text-stroke: .6px #333; }
				.label { margin-top: 0; line-height: 17px; font-size: 11.5px; }
				.drop { color: #333; margin-top: 2px; }
			</style>
			<div class="art">${art}</div>
			<div class="label">${this.getAttribute('label')}</div>
			${drop}`;
	}
}

class CadCol extends HTMLElement {
	constructor() {
		super();
		this.attachShadow({ mode: 'open' });
	}
	connectedCallback() {
		const w = this.getAttribute('width');
		this.shadowRoot.innerHTML = `
			<style>:host { display: flex; flex-direction: column; gap: 2px; flex: none; ${w ? `width:${w}px;` : ''} }</style>
			<slot></slot>`;
	}
}

class CadRowFlat extends HTMLElement {
	constructor() {
		super();
		this.attachShadow({ mode: 'open' }).innerHTML = `
			<style>:host { display: flex; flex: none; height: 22px; }</style><slot></slot>`;
	}
}

class CadTool extends HTMLElement {
	constructor() {
		super();
		this.attachShadow({ mode: 'open' });
	}
	connectedCallback() {
		const split = this.hasAttribute('split');
		const active = this.hasAttribute('active');
		this.shadowRoot.innerHTML = `
			<style>
				:host { display: flex; flex: none; align-self: flex-start; height: 22px; box-sizing: border-box; border: 1px solid ${active ? '#3a7fc4' : '#d0d0d0'}; background: ${active ? '#c6dff4' : 'linear-gradient(#f8f8f8, #e9e9e9)'}; color: #333; }
				.i { width: 22px; display: flex; align-items: center; justify-content: center; }
				.s { width: 11px; border-left: 1px solid #cfcfcf; display: flex; align-items: center; justify-content: center; }
			</style>
			<div class="i"><cad-icon name="${this.getAttribute('icon')}"></cad-icon></div>
			${split ? `<div class="s"><cad-icon name="caret"></cad-icon></div>` : ''}`;
	}
}

class CadRow extends HTMLElement {
	constructor() {
		super();
		this.attachShadow({ mode: 'open' });
	}
	connectedCallback() {
		this.shadowRoot.innerHTML = `
			<style>
				:host { display: flex; align-items: center; height: 22px; flex: none; white-space: nowrap; font-size: 11.5px; color: #222; }
				span { margin-left: 3px; padding-bottom: 2px; }
			</style>
			<cad-icon name="${this.getAttribute('icon')}"></cad-icon><span>${this.getAttribute('label')}</span>`;
	}
}

class CadSelect extends HTMLElement {
	constructor() {
		super();
		this.attachShadow({ mode: 'open' });
	}
	connectedCallback() {
		this.shadowRoot.innerHTML = `
			<style>
				:host { display: flex; align-items: center; flex: none; width: ${this.getAttribute('width')}px; height: 22px; box-sizing: border-box; border: 1px solid #d0d0d0; background: linear-gradient(#f8f8f8, #e9e9e9); color: #222; font-size: 11.5px; white-space: nowrap; overflow: hidden; }
				.main { flex: 1; display: flex; align-items: center; padding-left: 2px; overflow: hidden; }
				::slotted(span) { padding-bottom: 2px; }
				.arrow { color: #333; transform: scale(1.3); margin: 0 5px; }
			</style>
			<div class="main"><slot></slot></div>
			<cad-icon class="arrow" name="caret"></cad-icon>`;
	}
}

class CadSwatch extends HTMLElement {
	constructor() {
		super();
		this.attachShadow({ mode: 'open' });
	}
	connectedCallback() {
		const w = this.getAttribute('w');
		const h = this.getAttribute('h') || w;
		this.shadowRoot.innerHTML = `<style>:host { display: block; flex: none; width: ${w}px; height: ${h}px; background: #000; }</style>`;
	}
}

class CadViewport extends HTMLElement {
	constructor() {
		super();
		// each entry is x1, y1, x2, y2 in page coordinates
		const lines = [
			[210.5,150,210.5,361],[305.5,150,305.5,361],[431.5,150,431.5,361],[507.5,150,507.5,361],
			[658.5,150,658.5,361],[734.5,150,734.5,361],[1055.5,150,1055.5,361],
			[210,361.5,1365,361.5],[0,213.5,507.5,213.5],
			[619.5,150,619.5,631],[695.5,150,695.5,631],
			[394.5,150,394.5,155.5],[394.5,155.5,470.5,155.5],[470.5,150,470.5,250.5],[476.5,150,476.5,243.5],
			[470.5,174.5,476.5,174.5],[514.5,150,514.5,206.5],[521.5,150,521.5,206.5],[514.5,174.5,521.5,174.5],
			[521.5,199.5,596.5,199.5],[596.5,199.5,596.5,206.5],[476.5,206.5,552.5,206.5],[552.5,206.5,552.5,243.5],
			[476.5,243.5,552.5,243.5],[575.5,206.5,650.5,206.5],[575.5,206.5,575.5,243.5],[575.5,243.5,688.5,243.5],
			[521.5,243.5,521.5,250.5],[596.5,243.5,596.5,250.5],[470.5,250.5,596.5,250.5],[619.5,250.5,695.5,250.5],
			[619.5,199.5,650.5,199.5],[644.5,150,644.5,155.5],[644.5,155.5,650.5,155.5],[650.5,155.5,650.5,243.5],
			[650.5,168.5,688.5,168.5],[688.5,150,688.5,243.5],[688.5,155.5,770.5,155.5],[688.5,199.5,695.5,199.5],
			[720.5,150,720.5,155.5],[770.5,150,770.5,155.5],
			// lower block
			[476.5,403.5,688.5,403.5],[476.5,441.5,688.5,441.5],[476.5,478.5,688.5,478.5],[470.5,516.5,695.5,516.5],[470.5,535.5,695.5,535.5],
			[476.5,403.5,476.5,516.5],[688.5,403.5,688.5,516.5],[470.5,516.5,470.5,535.5],
			[552.5,403.5,552.5,441.5],[575.5,403.5,575.5,441.5],[650.5,403.5,650.5,441.5],
			[514.5,441.5,514.5,478.5],[590.5,441.5,590.5,478.5],[613.5,441.5,613.5,478.5],
			[552.5,478.5,552.5,516.5],[575.5,478.5,575.5,516.5],[650.5,478.5,650.5,516.5],
			[521.5,516.5,521.5,535.5],[596.5,516.5,596.5,535.5],
			// crossed boxes
			[650.5,403.5,688.5,441.5],[688.5,403.5,650.5,441.5],[476.5,441.5,514.5,478.5],[514.5,441.5,476.5,478.5],
			[650.5,478.5,688.5,516.5],[688.5,478.5,650.5,516.5],[470.5,516.5,521.5,535.5],[521.5,516.5,470.5,535.5]
		];
		const path = lines.map((l) => `M${l[0]} ${l[1]}L${l[2]} ${l[3]}`).join('');
		this.attachShadow({ mode: 'open' }).innerHTML = `
			<style>
				:host { display: block; flex: none; height: 481px; position: relative; background: #fff; overflow: hidden; }
				svg { display: block; position: absolute; left: 0; top: 0; }
				.label { position: absolute; left: 6px; top: 5px; font: bold 10.9px "Noto Sans", sans-serif; color: #111; white-space: nowrap; }
			</style>
			<svg width="1365" height="481" viewBox="0 150 1365 481">
				<path d="${path}" stroke="#000" stroke-width="1" fill="none" shape-rendering="crispEdges"/>
				<rect x="1364" y="150" width="1" height="481" fill="#ddd"/>
				<!-- ucs -->
				<path d="M16.500 568V613M21 617.500H64" stroke="#222" fill="none" shape-rendering="crispEdges"/>
				<rect x="12.500" y="613.500" width="8" height="8" fill="none" stroke="#222" shape-rendering="crispEdges"/>
				<path d="M17 549 23 556 29 549M23 556V563M69 604 83 617M83 604 69 617" fill="none" stroke="#333"/>
				<!-- viewport controls -->
				<g fill="none" stroke="#999">
					<rect x="1303.500" y="163.500" width="11" height="4" fill="#ddd"/>
					<rect x="1326.500" y="158.500" width="8" height="8"/>
					<rect x="1323.500" y="161.500" width="8" height="8" fill="#eee"/>
				</g>
				<path d="M1344 160 1353 168M1353 160 1344 168" stroke="#aaa" stroke-width="3"/>
				<!-- view cube -->
				<circle cx="1309" cy="228" r="36" fill="none" stroke="#fafafa" stroke-width="9"/>
				<rect x="1292.500" y="211.500" width="33" height="33" fill="#f6f6f6" stroke="#999"/>
				<rect x="1298" y="217" width="22" height="22" fill="#e6e6e6"/>
				<text x="1309" y="231" text-anchor="middle" font-family="DejaVu Sans" font-stretch="condensed" font-size="9" fill="#888">Верх</text>
				<g font-family="Liberation Sans" font-size="15" fill="#d0d0d0" text-anchor="middle">
					<text x="1309" y="196">С</text><text x="1270" y="233">З</text><text x="1346" y="233">В</text><text x="1309" y="271">Ю</text>
				</g>
				<rect x="1285" y="289" width="46" height="15" rx="4" fill="#eef0f6"/>
				<text x="1289" y="300" font-family="Liberation Sans" font-size="10" fill="#aaa">МСК</text>
				<path d="M1318 294H1327L1322.500 299Z" fill="none" stroke="#c4c8d8"/>
				<!-- navigation bar -->
				<rect x="1328" y="330" width="35" height="215" rx="5" fill="#fff" fill-opacity=".75" stroke="#d0d0d0" stroke-width="2"/>
				<g fill="none" stroke="#ddd">
					<circle cx="1355" cy="336" r="3" fill="#e4e4e4" stroke="none"/>
					<rect x="1335" y="351" width="21" height="21" rx="4"/>
					<circle cx="1345" cy="361" r="9"/><circle cx="1345" cy="361" r="5"/>
					<path d="M1332 387.500H1358"/>
					<path d="M1334 408 1339 405 1339 396 1342 402V392L1345 401V391L1348 401V393L1350 402 1354 396 1354 408 1347 415H1340Z"/>
					<path d="M1335 421 1344 430M1356 421 1344 430M1335 441 1344 430M1335 421v5M1335 421h5M1356 421v5M1356 421h-5M1335 441v-5M1335 441h5"/>
					<circle cx="1349" cy="434" r="5" fill="#fff"/><path d="M1353 438 1356 442" stroke-width="3"/>
					<path d="M1345 458V488M1341 463 1345 458 1349 463"/>
					<ellipse cx="1345" cy="472" rx="11" ry="5"/>
					<path d="M1332 495.500H1358"/>
					<rect x="1334" y="500" width="6" height="5"/><rect x="1342" y="500" width="6" height="5"/><rect x="1350" y="500" width="6" height="5"/>
					<rect x="1334" y="508" width="12" height="11"/>
				</g>
				<path d="M1338 510V517L1343 513.500Z" fill="#e0e0e0"/>
				<circle cx="1355" cy="536" r="3" fill="#e4e4e4"/>
			</svg>
			<div class="label">[−][Верхняя][2D каркас]</div>`;
	}
}

class CadSheets extends HTMLElement {
	constructor() {
		super();
		this.attachShadow({ mode: 'open' }).innerHTML = `
			<style>
				:host { display: flex; flex: none; height: 18px; background: #f0f0f0; border-top: 1px solid #666; box-sizing: border-box; font: 11.5px "Liberation Sans", sans-serif; color: #111; position: relative; }
				svg { display: block; position: absolute; left: 0; top: 0; }
				.t { position: relative; line-height: 16px; height: 17px; flex: none; }
			</style>
			<svg width="230" height="18">
				<g fill="#ddd" stroke="#aaa">
					<rect x="2.500" y="1.500" width="13" height="13"/><rect x="16.500" y="1.500" width="13" height="13"/><rect x="30.500" y="1.500" width="14" height="13"/><rect x="45.500" y="1.500" width="14" height="13"/>
				</g>
				<path d="M8 3V12M13 3 9 7.500 13 12ZM26 3 22 7.500 26 12ZM35 3 39 7.500 35 12ZM50 3 54 7.500 50 12ZM56 3V12" fill="#888" stroke="#777"/>
				<path d="M62.500 1 68 14.500H120L125 1" fill="#fff" stroke="#333"/>
				<path d="M120 14.500H168L172 1M168 14.500H216L222 1" fill="none" stroke="#555"/>
				<path d="M68 15.500H120" stroke="#fff"/>
			</svg>
			<span class="t" style="margin-left:74px">Модель</span>
			<span class="t" style="margin-left:15px">Лист1</span>
			<span class="t" style="margin-left:16px">Лист2</span>`;
	}
}

class CadCommand extends HTMLElement {
	constructor() {
		super();
		this.attachShadow({ mode: 'open' }).innerHTML = `
			<style>
				:host { display: flex; flex: none; height: 56px; box-sizing: border-box; border-top: 4px solid #6f6f6f; background: #fff; font: 13.33px "Liberation Mono", monospace; }
				.side { width: 22px; flex: none; background: #5e5e5e; display: flex; flex-direction: column; align-items: center; }
				.grip { height: 8px; margin-top: 1px; width: 18px; background: repeating-linear-gradient(90deg, #999 0 1px, transparent 1px 2px); opacity: .8; }
				.main { flex: 1; display: flex; flex-direction: column; min-width: 0; }
				.hist { height: 30px; box-sizing: border-box; border-bottom: 1px solid #8a8a8a; padding: 12px 0 0 3px; color: #111; line-height: 15px; white-space: pre; }
				.input { flex: 1; display: flex; align-items: center; background: #f6f6f6; color: #aaa; font-style: italic; padding-left: 6px; }
				.prompt { width: 14px; height: 14px; box-sizing: border-box; border: 1px solid #aaa; background: #e4e4ea; margin-right: 5px; }
				.c { color: #888; margin-right: 7px; display: inline-flex; }
			</style>
			<div class="side">
				<div class="grip"></div>
				<svg width="14" height="14" style="margin-top:6px"><path d="M2 2 12 12M12 2 2 12" stroke="#eee" stroke-width="2.500"/></svg>
				<svg width="16" height="16" style="margin-top:6px"><path d="M1 3 4 6 6 4 3 1C6 0 9 2 8 6L14 12C15 14 13 16 11 14L6 8C2 9 0 6 1 3Z" fill="#f4f4f4"/></svg>
			</div>
			<div class="main">
				<div class="hist">Команда: _plot</div>
				<div class="input">
					<svg class="prompt" viewBox="0 0 14 14"><path d="M3 3 7 7 3 11M8 11H12" fill="none" stroke="#444"/></svg>
					<span class="c"><cad-icon name="caret"></cad-icon></span>
					<span>Введите команду</span>
				</div>
			</div>`;
	}
}

class CadStatus extends HTMLElement {
	constructor() {
		super();
		const toggles = [['sSnap', 0], ['sDots', 0], ['sGrid', 0], ['sOrtho', 1], ['sPolar', 0], ['sOsnap', 1], ['s3d', 1], ['sAngle', 1], ['sDyn', 1], ['sDucs', 1], ['sPlus', 1], ['sTrans', 1], ['sList', 0], ['sQP', 0], ['sCycle', 0]];
		this.attachShadow({ mode: 'open' }).innerHTML = `
			<style>
				:host { display: flex; flex: none; height: 24px; box-sizing: border-box; border-top: 1px solid #444; background: linear-gradient(#aaa, #8a8a8a 60%, #6a6a6a); color: #111; font: 11.4px "Liberation Sans", sans-serif; align-items: stretch; white-space: nowrap; }
				.coords { width: 204px; flex: none; padding-left: 12px; line-height: 21px; box-sizing: border-box; font-size: 10.9px; background: linear-gradient(#8c8c8c, #6c6c6c); }
				.b { width: 22px; box-sizing: border-box; flex: none; display: flex; align-items: center; justify-content: center; border-left: 1px solid #6a6a6a; height: 21px; background: linear-gradient(#c4c4c4, #969696); }
				.on { background: linear-gradient(#d6ecf4, #9ccce0); }
				.spacer { flex: none; background: linear-gradient(#9a9a9a, #7a7a7a); border-left: 1px solid #6a6a6a; height: 21px; }
				.r { flex: none; display: flex; align-items: center; justify-content: center; height: 21px; background: linear-gradient(#c4c4c4, #969696); border-left: 1px solid #6a6a6a; box-sizing: border-box; }
				.dark { background: linear-gradient(#777, #5e5e5e); }
				.g { flex: none; height: 21px; background: linear-gradient(#8c8c8c, #6c6c6c); }
				.c { color: #111; }
			</style>
			<div class="coords">54164.4872, -14518.4398, 0.0000</div>
			${toggles.map(([i, on]) => `<div class="b ${on ? 'on' : ''}"><cad-icon name="${i}"></cad-icon></div>`).join('')}
			<div class="spacer" style="width:463px"></div>
			<div class="r" style="width:60px;color:#11224a">РМОДЕЛЬ</div>
			<div class="r" style="width:22px"><cad-icon name="sModel"></cad-icon></div>
			<div class="r" style="width:22px"><cad-icon name="sLayout"></cad-icon></div>
			<div class="g" style="width:13px"></div>
			<div class="r" style="width:54px;gap:3px"><cad-icon name="sAnno"></cad-icon>1:1<cad-icon name="caret" class="c"></cad-icon></div>
			<div class="r" style="width:22px"><cad-icon name="sAnno2"></cad-icon></div>
			<div class="r" style="width:22px"><cad-icon name="sAnno3"></cad-icon></div>
			<div class="g" style="width:4px"></div>
			<div class="r" style="width:22px"><cad-icon name="gear"></cad-icon></div>
			<div class="r" style="width:25px"><cad-icon name="sLock"></cad-icon></div>
			<div class="r" style="width:20px"><cad-icon name="sChip"></cad-icon></div>
			<div class="r dark" style="width:45px;gap:5px"><cad-icon name="sIso"></cad-icon><cad-icon name="sBulb"></cad-icon></div>
			<div class="r" style="width:16px"><cad-icon name="caret" class="c"></cad-icon></div>
			<div class="r" style="flex:1"><cad-icon name="sWin"></cad-icon></div>`;
	}
}

customElements.define('cad-icon', CadIcon);
customElements.define('cad-app', CadApp);
customElements.define('cad-titlebar', CadTitlebar);
customElements.define('cad-tabs', CadTabs);
customElements.define('cad-ribbon', CadRibbon);
customElements.define('cad-panel', CadPanel);
customElements.define('cad-big', CadBig);
customElements.define('cad-col', CadCol);
customElements.define('cad-row-flat', CadRowFlat);
customElements.define('cad-tool', CadTool);
customElements.define('cad-row', CadRow);
customElements.define('cad-select', CadSelect);
customElements.define('cad-swatch', CadSwatch);
customElements.define('cad-viewport', CadViewport);
customElements.define('cad-sheets', CadSheets);
customElements.define('cad-command', CadCommand);
customElements.define('cad-status', CadStatus);
</script>
</body>
</html>
